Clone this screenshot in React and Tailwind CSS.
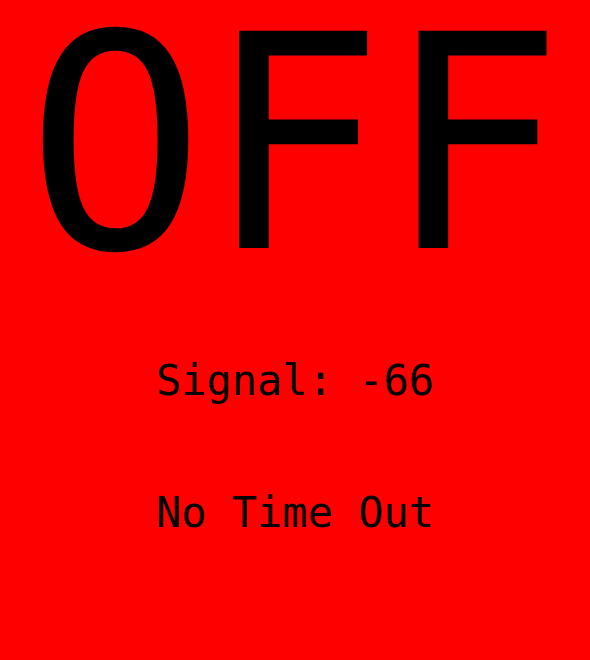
export default function App() {
  return (
    <div className="w-[590px] h-[660px] bg-[#ff0000] text-black flex flex-col items-center font-['DejaVu_Sans_Mono',monospace]">
      <div className="text-[298px] leading-[290px]">OFF</div>
      <div className="text-[42px] leading-none mt-[70px]">Signal: -66</div>
      <div className="text-[42px] leading-none mt-[90px]">No Time Out</div>
    </div>
  );
}
